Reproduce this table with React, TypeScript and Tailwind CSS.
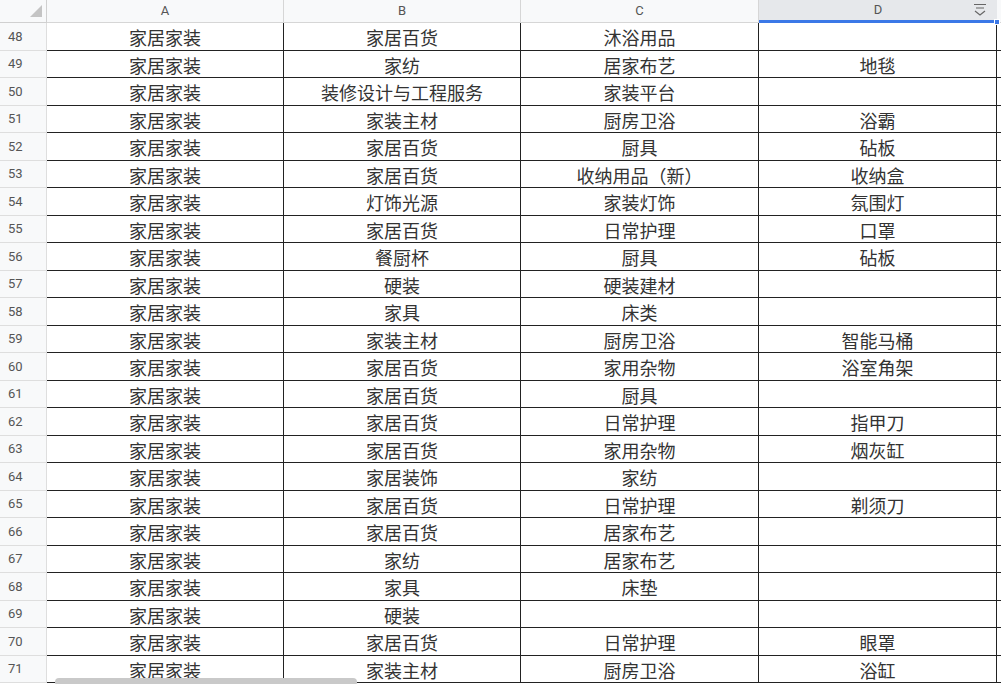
const rows: [number, string, string, string, string][] = [
  [48, '家居家装', '家居百货', '沐浴用品', ''],
  [49, '家居家装', '家纺', '居家布艺', '地毯'],
  [50, '家居家装', '装修设计与工程服务', '家装平台', ''],
  [51, '家居家装', '家装主材', '厨房卫浴', '浴霸'],
  [52, '家居家装', '家居百货', '厨具', '砧板'],
  [53, '家居家装', '家居百货', '收纳用品（新）', '收纳盒'],
  [54, '家居家装', '灯饰光源', '家装灯饰', '氛围灯'],
  [55, '家居家装', '家居百货', '日常护理', '口罩'],
  [56, '家居家装', '餐厨杯', '厨具', '砧板'],
  [57, '家居家装', '硬装', '硬装建材', ''],
  [58, '家居家装', '家具', '床类', ''],
  [59, '家居家装', '家装主材', '厨房卫浴', '智能马桶'],
  [60, '家居家装', '家居百货', '家用杂物', '浴室角架'],
  [61, '家居家装', '家居百货', '厨具', ''],
  [62, '家居家装', '家居百货', '日常护理', '指甲刀'],
  [63, '家居家装', '家居百货', '家用杂物', '烟灰缸'],
  [64, '家居家装', '家居装饰', '家纺', ''],
  [65, '家居家装', '家居百货', '日常护理', '剃须刀'],
  [66, '家居家装', '家居百货', '居家布艺', ''],
  [67, '家居家装', '家纺', '居家布艺', ''],
  [68, '家居家装', '家具', '床垫', ''],
  [69, '家居家装', '硬装', '', ''],
  [70, '家居家装', '家居百货', '日常护理', '眼罩'],
  [71, '家居家装', '家装主材', '厨房卫浴', '浴缸'],
];

const cols = 'grid grid-cols-[47px_237px_237px_238px_238px_1fr]';

export default function App() {
  return (
    <div
      className="relative h-[684px] w-[1001px] overflow-hidden bg-white"
      style={{ fontFamily: 'Roboto, "Liberation Sans", "Noto Sans CJK SC", sans-serif' }}
    >
      {/* column header */}
      <div className={`${cols} h-[22px] bg-[#f8f9fa] text-[13px] text-[#555]`}>
        <div className="relative border-r border-b border-[#d0d0d0] bg-[#f8f9fa]">
          <div className="absolute right-[4px] bottom-[5px] h-0 w-0 [border-right:12px_solid_#c4c4c4] [border-top:12px_solid_transparent]" />
        </div>
        <div className="flex items-center justify-center border-r border-b border-[#d6d6d6]">A</div>
        <div className="flex items-center justify-center border-r border-b border-[#d6d6d6]">B</div>
        <div className="flex items-center justify-center border-r border-b border-[#d6d6d6]">C</div>
        <div className="relative flex items-center justify-center border-b-[3px] border-[#3b78e7] bg-[#e6e8eb]">
          D
          <svg className="absolute right-[10px] top-[3px]" width="14" height="14" viewBox="0 0 14 14" fill="none" stroke="#666" strokeWidth="1.2">
            <path d="M1 1.5h12M3 5h8M2 8l5 4 5-4" />
          </svg>
          <div className="absolute right-[-3px] bottom-[-5px] h-[6px] w-[6px] border border-white bg-[#3b78e7]" />
        </div>
        <div className="border-b border-[#d6d6d6] bg-[#f8f9fa]" />
      </div>

      {/* rows */}
      <div className="border-t border-[#222]">
        {rows.map(([n, a, b, c, d]) => (
          <div
            key={n}
            className={`${cols} h-[27.5px] text-[18px] leading-none text-[#333]`}
            style={{ fontFamily: '"Noto Sans CJK SC", sans-serif' }}
          >
            <div
              className="flex items-center border-r border-b border-[#dedede] bg-[#f8f9fa] pl-[8px] text-[13px] text-[#555]"
              style={{ fontFamily: 'Roboto, "Liberation Sans", sans-serif' }}
            >
              {n}
            </div>
            <div className="flex items-center justify-center border-r border-b border-[#222] pt-[2px]">{a}</div>
            <div className="flex items-center justify-center border-r border-b border-[#222] pt-[2px]">{b}</div>
            <div className="flex items-center justify-center border-r border-b border-[#222] pt-[2px]">{c}</div>
            <div className="flex items-center justify-center border-r border-b border-[#222] pt-[2px]">{d}</div>
            <div className="border-b border-[#222]" />
          </div>
        ))}
      </div>

      {/* horizontal scrollbar thumb */}
      <div className="absolute bottom-[-2px] left-[55px] h-[8px] w-[302px] rounded-full bg-[#c9c9c9]" />
    </div>
  );
}
